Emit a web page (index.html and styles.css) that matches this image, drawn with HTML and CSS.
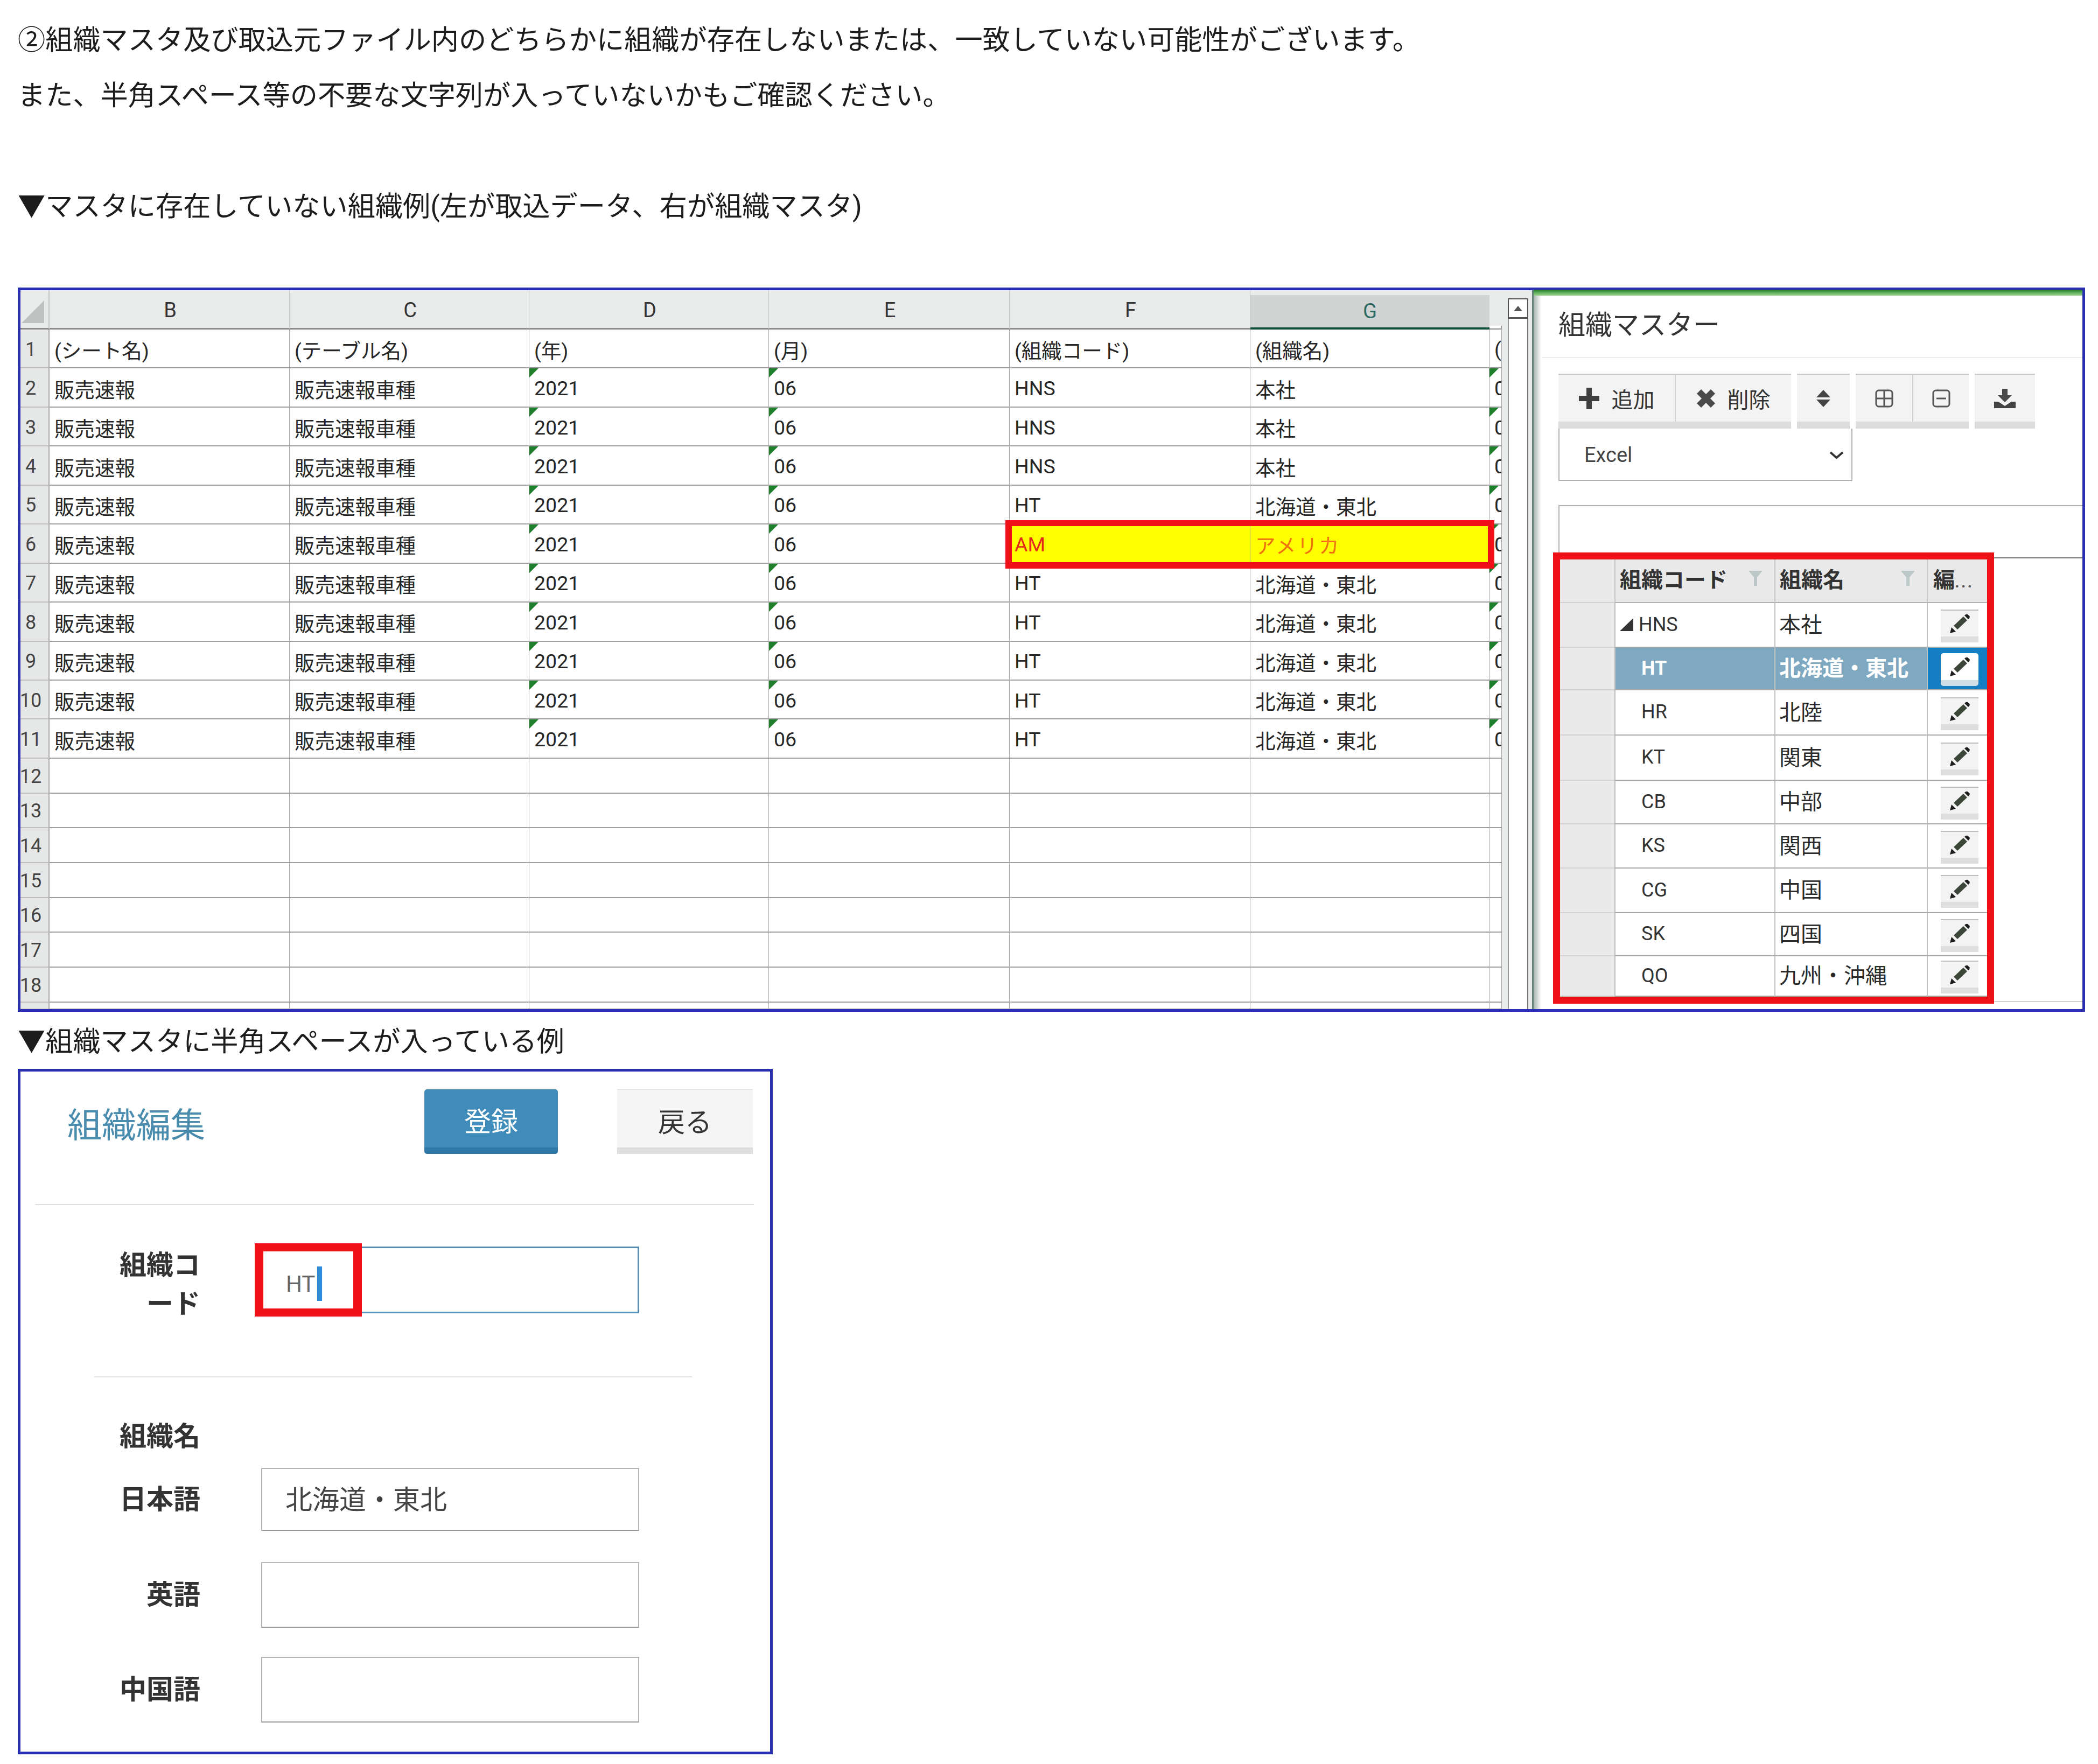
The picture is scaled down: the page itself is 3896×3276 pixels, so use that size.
FILE: index.html
```html
<!DOCTYPE html>
<html lang="ja">
<head>
    <meta charset="UTF-8">
    <title>組織マスタの確認</title>
    <link rel="stylesheet" href="styles.css">
</head>
<body>
    <svg class="icon-defs" width="0" height="0">
        <symbol id="pencil" viewBox="0 0 37 36">
            <path d="M0 36 L3 25 L11 33 Z" fill="#1d1f1d"/>
            <path d="M7 22 L25 5 L32 12 L14 29 Z" fill="#3c473a"/>
            <path d="M27 3 Q30 0 33 1 L37 5 Q37 8 34 10 Z" fill="#1d1f1d"/>
        </symbol>
        <symbol id="funnel" viewBox="0 0 26 28">
            <path d="M0 0 H26 L16 12 V28 H10 V12 Z" fill="#bcc8c8"/>
        </symbol>
    </svg>

    <p class="line">②組織マスタ及び取込元ファイル内のどちらかに組織が存在しないまたは、一致していない可能性がございます。</p>
    <p class="line">また、半角スペース等の不要な文字列が入っていないかもご確認ください。</p>
    <p class="line line-gap">▼マスタに存在していない組織例(左が取込データ、右が組織マスタ)</p>

    <div class="frame frame-wide">
        <div class="sheet">
            <div class="sheet-grid">
                <div class="sheet-row sheet-head">
                    <div class="corner"><svg width="42" height="42" viewBox="0 0 42 42"><path d="M42 0 V42 H0 Z" fill="#bfc1c1"/></svg></div>
                    <div class="col-head">B</div>
                    <div class="col-head">C</div>
                    <div class="col-head">D</div>
                    <div class="col-head">E</div>
                    <div class="col-head">F</div>
                    <div class="col-head col-active">G</div>
                    <div class="col-end"></div>
                </div>

                <div class="sheet-row">
                    <div class="row-no">1</div>
                    <div class="cell">(シート名)</div>
                    <div class="cell">(テーブル名)</div>
                    <div class="cell">(年)</div>
                    <div class="cell">(月)</div>
                    <div class="cell">(組織コード)</div>
                    <div class="cell">(組織名)</div>
                    <div class="cell">(</div>
                </div>
                <div class="sheet-row">
                    <div class="row-no">2</div>
                    <div class="cell">販売速報</div>
                    <div class="cell">販売速報車種</div>
                    <div class="cell flag">2021</div>
                    <div class="cell flag">06</div>
                    <div class="cell">HNS</div>
                    <div class="cell">本社</div>
                    <div class="cell flag">0</div>
                </div>
                <div class="sheet-row">
                    <div class="row-no">3</div>
                    <div class="cell">販売速報</div>
                    <div class="cell">販売速報車種</div>
                    <div class="cell flag">2021</div>
                    <div class="cell flag">06</div>
                    <div class="cell">HNS</div>
                    <div class="cell">本社</div>
                    <div class="cell flag">0</div>
                </div>
                <div class="sheet-row">
                    <div class="row-no">4</div>
                    <div class="cell">販売速報</div>
                    <div class="cell">販売速報車種</div>
                    <div class="cell flag">2021</div>
                    <div class="cell flag">06</div>
                    <div class="cell">HNS</div>
                    <div class="cell">本社</div>
                    <div class="cell flag">0</div>
                </div>
                <div class="sheet-row">
                    <div class="row-no">5</div>
                    <div class="cell">販売速報</div>
                    <div class="cell">販売速報車種</div>
                    <div class="cell flag">2021</div>
                    <div class="cell flag">06</div>
                    <div class="cell">HT</div>
                    <div class="cell">北海道・東北</div>
                    <div class="cell flag">0</div>
                </div>
                <div class="sheet-row">
                    <div class="row-no">6</div>
                    <div class="cell">販売速報</div>
                    <div class="cell">販売速報車種</div>
                    <div class="cell flag">2021</div>
                    <div class="cell flag">06</div>
                    <div class="cell cell-alert">AM</div>
                    <div class="cell cell-alert cell-alert-name">アメリカ</div>
                    <div class="cell flag">0</div>
                </div>
                <div class="sheet-row">
                    <div class="row-no">7</div>
                    <div class="cell">販売速報</div>
                    <div class="cell">販売速報車種</div>
                    <div class="cell flag">2021</div>
                    <div class="cell flag">06</div>
                    <div class="cell">HT</div>
                    <div class="cell">北海道・東北</div>
                    <div class="cell flag">0</div>
                </div>
                <div class="sheet-row">
                    <div class="row-no">8</div>
                    <div class="cell">販売速報</div>
                    <div class="cell">販売速報車種</div>
                    <div class="cell flag">2021</div>
                    <div class="cell flag">06</div>
                    <div class="cell">HT</div>
                    <div class="cell">北海道・東北</div>
                    <div class="cell flag">0</div>
                </div>
                <div class="sheet-row">
                    <div class="row-no">9</div>
                    <div class="cell">販売速報</div>
                    <div class="cell">販売速報車種</div>
                    <div class="cell flag">2021</div>
                    <div class="cell flag">06</div>
                    <div class="cell">HT</div>
                    <div class="cell">北海道・東北</div>
                    <div class="cell flag">0</div>
                </div>
                <div class="sheet-row">
                    <div class="row-no">10</div>
                    <div class="cell">販売速報</div>
                    <div class="cell">販売速報車種</div>
                    <div class="cell flag">2021</div>
                    <div class="cell flag">06</div>
                    <div class="cell">HT</div>
                    <div class="cell">北海道・東北</div>
                    <div class="cell flag">0</div>
                </div>
                <div class="sheet-row">
                    <div class="row-no">11</div>
                    <div class="cell">販売速報</div>
                    <div class="cell">販売速報車種</div>
                    <div class="cell flag">2021</div>
                    <div class="cell flag">06</div>
                    <div class="cell">HT</div>
                    <div class="cell">北海道・東北</div>
                    <div class="cell flag">0</div>
                </div>

                <div class="sheet-row row-empty"><div class="row-no">12</div><div class="cell"></div><div class="cell"></div><div class="cell"></div><div class="cell"></div><div class="cell"></div><div class="cell"></div><div class="cell"></div></div>
                <div class="sheet-row row-empty"><div class="row-no">13</div><div class="cell"></div><div class="cell"></div><div class="cell"></div><div class="cell"></div><div class="cell"></div><div class="cell"></div><div class="cell"></div></div>
                <div class="sheet-row row-empty"><div class="row-no">14</div><div class="cell"></div><div class="cell"></div><div class="cell"></div><div class="cell"></div><div class="cell"></div><div class="cell"></div><div class="cell"></div></div>
                <div class="sheet-row row-empty"><div class="row-no">15</div><div class="cell"></div><div class="cell"></div><div class="cell"></div><div class="cell"></div><div class="cell"></div><div class="cell"></div><div class="cell"></div></div>
                <div class="sheet-row row-empty"><div class="row-no">16</div><div class="cell"></div><div class="cell"></div><div class="cell"></div><div class="cell"></div><div class="cell"></div><div class="cell"></div><div class="cell"></div></div>
                <div class="sheet-row row-empty"><div class="row-no">17</div><div class="cell"></div><div class="cell"></div><div class="cell"></div><div class="cell"></div><div class="cell"></div><div class="cell"></div><div class="cell"></div></div>
                <div class="sheet-row row-empty"><div class="row-no">18</div><div class="cell"></div><div class="cell"></div><div class="cell"></div><div class="cell"></div><div class="cell"></div><div class="cell"></div><div class="cell"></div></div>
                <div class="sheet-row row-cut"><div class="row-no"></div><div class="cell"></div><div class="cell"></div><div class="cell"></div><div class="cell"></div><div class="cell"></div><div class="cell"></div><div class="cell"></div></div>
            </div>

            <div class="scrollbar">
                <div class="scroll-up"><svg width="16" height="10" viewBox="0 0 16 10"><path d="M8 0 L16 10 H0 Z" fill="#555"/></svg></div>
            </div>

            <div class="alert-box"></div>
        </div>

        <div class="panel">
            <div class="panel-bar"></div>
            <div class="panel-title">組織マスター</div>

            <div class="panel-body">
                <div class="toolbar">
                    <div class="tool-group">
                        <div class="tool-btn tool-text">
                            <svg width="38" height="40" viewBox="0 0 38 40"><path d="M14 0 H24 V15 H38 V25 H24 V40 H14 V25 H0 V15 H14 Z" fill="#3f3f3f"/></svg>
                            追加
                        </div>
                        <div class="tool-btn tool-text">
                            <svg width="34" height="34" viewBox="0 0 34 34"><path d="M8 0 L17 9 L26 0 L34 8 L25 17 L34 26 L26 34 L17 25 L8 34 L0 26 L9 17 L0 8 Z" fill="#4a4a4a"/></svg>
                            削除
                        </div>
                    </div>
                    <div class="tool-group">
                        <div class="tool-btn tool-sort">
                            <svg width="26" height="32" viewBox="0 0 26 32"><path d="M13 0 L26 14 H0 Z M0 18 H26 L13 32 Z" fill="#444"/></svg>
                        </div>
                    </div>
                    <div class="tool-group">
                        <div class="tool-btn tool-expand">
                            <svg width="34" height="34" viewBox="0 0 34 34"><rect x="2" y="2" width="30" height="30" rx="5" fill="none" stroke="#555" stroke-width="3"/><path d="M17 3 V31 M3 17 H31" stroke="#555" stroke-width="3"/></svg>
                        </div>
                        <div class="tool-btn tool-expand">
                            <svg width="34" height="34" viewBox="0 0 34 34"><rect x="2" y="2" width="30" height="30" rx="5" fill="none" stroke="#555" stroke-width="3"/><path d="M8 17 H26" stroke="#555" stroke-width="3"/></svg>
                        </div>
                    </div>
                    <div class="tool-group">
                        <div class="tool-btn tool-save">
                            <svg width="40" height="36" viewBox="0 0 40 36"><path d="M15 0 H25 V12 H33 L20 25 L7 12 H15 Z" fill="#4a4a4a"/><path d="M0 24 H8 L20 32 L32 24 H40 V36 H0 Z" fill="#444"/></svg>
                        </div>
                    </div>
                </div>

                <div class="format-select">
                    Excel
                    <svg width="27" height="15" viewBox="0 0 27 15"><path d="M2 2 L13.5 12 L25 2" fill="none" stroke="#333" stroke-width="4"/></svg>
                </div>

                <div class="group-bar"></div>

                <div class="tree-wrap">
                    <div class="tree">
                        <div class="tree-corner"></div>
                        <div class="tree-head">組織コード<svg width="26" height="28"><use href="#funnel"/></svg></div>
                        <div class="tree-head">組織名<svg width="26" height="28"><use href="#funnel"/></svg></div>
                        <div class="tree-head tree-head-edit">編<span class="tree-more">...</span></div>

                        <div class="tree-side"></div>
                        <div class="tree-code tree-root"><svg width="25" height="24" viewBox="0 0 25 24"><path d="M25 0 V24 H0 Z" fill="#333"/></svg>HNS</div>
                        <div class="tree-name">本社</div>
                        <div class="tree-edit"><div class="edit-btn"><svg width="37" height="36"><use href="#pencil"/></svg></div></div>

                        <div class="tree-side"></div>
                        <div class="tree-code is-picked">HT</div>
                        <div class="tree-name is-picked">北海道・東北</div>
                        <div class="tree-edit is-picked-edit"><div class="edit-btn"><svg width="37" height="36"><use href="#pencil"/></svg></div></div>

                        <div class="tree-side"></div>
                        <div class="tree-code">HR</div>
                        <div class="tree-name">北陸</div>
                        <div class="tree-edit"><div class="edit-btn"><svg width="37" height="36"><use href="#pencil"/></svg></div></div>

                        <div class="tree-side"></div>
                        <div class="tree-code">KT</div>
                        <div class="tree-name">関東</div>
                        <div class="tree-edit"><div class="edit-btn"><svg width="37" height="36"><use href="#pencil"/></svg></div></div>

                        <div class="tree-side"></div>
                        <div class="tree-code">CB</div>
                        <div class="tree-name">中部</div>
                        <div class="tree-edit"><div class="edit-btn"><svg width="37" height="36"><use href="#pencil"/></svg></div></div>

                        <div class="tree-side"></div>
                        <div class="tree-code">KS</div>
                        <div class="tree-name">関西</div>
                        <div class="tree-edit"><div class="edit-btn"><svg width="37" height="36"><use href="#pencil"/></svg></div></div>

                        <div class="tree-side"></div>
                        <div class="tree-code">CG</div>
                        <div class="tree-name">中国</div>
                        <div class="tree-edit"><div class="edit-btn"><svg width="37" height="36"><use href="#pencil"/></svg></div></div>

                        <div class="tree-side"></div>
                        <div class="tree-code">SK</div>
                        <div class="tree-name">四国</div>
                        <div class="tree-edit"><div class="edit-btn"><svg width="37" height="36"><use href="#pencil"/></svg></div></div>

                        <div class="tree-side"></div>
                        <div class="tree-code">QO</div>
                        <div class="tree-name">九州・沖縄</div>
                        <div class="tree-edit"><div class="edit-btn"><svg width="37" height="36"><use href="#pencil"/></svg></div></div>
                    </div>
                    <div class="tree-rest"></div>
                </div>
            </div>
        </div>
    </div>

    <p class="line line-under">▼組織マスタに半角スペースが入っている例</p>

    <div class="frame frame-form">
        <div class="form-head">
            <div class="form-title">組織編集</div>
            <div class="btn btn-save">登録</div>
            <div class="btn btn-back">戻る</div>
        </div>

        <div class="form-row form-row-code">
            <div class="label">組織コ<br>ード</div>
            <div class="field field-focus">
                <span class="field-code">HT</span><span class="caret"></span>
                <div class="code-mark"></div>
            </div>
        </div>

        <div class="form-line"></div>

        <div class="form-row form-row-title">
            <div class="label">組織名</div>
        </div>
        <div class="form-row form-row-first">
            <div class="label">日本語</div>
            <div class="field field-short">北海道・東北</div>
        </div>
        <div class="form-row form-row-next">
            <div class="label">英語</div>
            <div class="field"></div>
        </div>
        <div class="form-row form-row-last">
            <div class="label">中国語</div>
            <div class="field"></div>
        </div>
    </div>
</body>
</html>
```

FILE: styles.css
```css
* {
    margin: 0;
    padding: 0;
    box-sizing: border-box;
}

body {
    font-family: Roboto, "Noto Sans CJK JP", sans-serif;
    background: white;
    color: #222;
    padding: 22px 0 0 33px;
}

.icon-defs {
    position: absolute;
}

.line {
    font-size: 51.2px;
    line-height: 105px;
    height: 103px;
    color: #1c1c1c;
    white-space: nowrap;
}

.line-gap {
    margin-top: 103px;
    margin-bottom: 100px;
}

.line-under {
    margin-top: 3px;
}

.frame {
    border: 5px solid #2a2fb0;
    background: white;
}

.frame-wide {
    width: 3839px;
    height: 1345px;
    display: flex;
}

.frame-form {
    width: 1402px;
    height: 1273px;
}

/* spreadsheet */

.sheet {
    position: relative;
    width: 2807px;
    height: 1335px;
    display: flex;
    background: #e9ebeb;
    overflow: hidden;
}

.sheet-grid {
    width: 2751px;
    flex-shrink: 0;
    background: white;
}

.sheet-row {
    display: grid;
    grid-template-columns: 54px 446px 445px 445px 447px 447px 444px 23px;
    height: 72.45px;
}

.sheet-head {
    height: 73px;
    background: #e9ebeb;
}

.row-empty {
    height: 64.7px;
}

.row-cut {
    height: 13px;
}

.corner {
    display: flex;
    align-items: flex-end;
    justify-content: flex-end;
    padding: 0 8px 9px 0;
    border-right: 2px solid #c4c6c6;
    border-bottom: 3px solid #8c8c8c;
}

.col-head {
    display: flex;
    align-items: center;
    justify-content: center;
    padding: 4px 0 0 3px;
    font-size: 38px;
    color: #333;
    border-right: 1px solid #c4c6c6;
    border-bottom: 3px solid #8c8c8c;
}

.col-active {
    margin-top: 9px;
    padding: 0;
    background: #d2d3d3;
    color: #2f6a62;
    border-right: none;
    border-bottom: 4px solid #0f4f3c;
}

.col-end {
    border-bottom: 2px solid #8c8c8c;
    border-right: 2px solid #a0a0a0;
    margin-top: 66px;
    background: white;
}

.row-no {
    display: flex;
    align-items: center;
    justify-content: center;
    padding: 3px 14px 0 0;
    font-size: 36px;
    color: #444;
    background: #e6e7e7;
    border-right: 2px solid #a8a8a8;
    border-bottom: 2px solid #c0c0c0;
}

.cell {
    position: relative;
    display: flex;
    align-items: center;
    padding: 3px 0 0 9px;
    font-size: 37.5px;
    color: #262626;
    white-space: nowrap;
    overflow: hidden;
    border-right: 1px solid #a8a8a8;
    border-bottom: 2px solid #a0a0a0;
}

.flag::before {
    content: "";
    position: absolute;
    left: 0;
    top: 0;
    border-top: 17px solid #1f7f2c;
    border-right: 17px solid transparent;
}

.cell-alert {
    background: #ffff00;
    color: #e62a1a;
}

.cell-alert-name {
    color: #f0700f;
    letter-spacing: 2.5px;
}

.alert-box {
    position: absolute;
    left: 1829px;
    top: 427px;
    width: 908px;
    height: 90px;
    border: 12px solid #ee1118;
    border-top-width: 11px;
}

.scrollbar {
    width: 38px;
    margin: 15px 0 0 11px;
    background: white;
    border-left: 2px solid #9a9a9a;
    border-right: 2px solid #777;
}

.scroll-up {
    height: 38px;
    display: flex;
    align-items: center;
    justify-content: center;
    border: 2px solid #555;
    border-bottom-width: 3px;
    margin: 0 -2px;
}

/* organisation master panel */

.panel {
    flex: 1;
    height: 1335px;
    border-left: 3px solid #5f7f78;
    background: linear-gradient(to right, #a8b4b0, #ffffff 14px);
}

.panel-bar {
    height: 10px;
    background: linear-gradient(to bottom, #2f8f35, #9ad28c);
}

.panel-title {
    height: 116px;
    margin-left: 16px;
    padding-left: 30px;
    font-size: 50px;
    line-height: 110px;
    color: #333;
    border-bottom: 2px solid #eeeeee;
}

.panel-body {
    padding-left: 46px;
}

.toolbar {
    display: flex;
    gap: 11px;
    margin-top: 29px;
    height: 102px;
}

.tool-group {
    display: flex;
    height: 102px;
    background: #f3f3f3;
    border-top: 2px solid #cccccc;
    border-bottom: 13px solid #dcdcdc;
}

.tool-btn {
    display: flex;
    align-items: center;
    justify-content: center;
    font-size: 40px;
    color: #333;
}

.tool-text {
    width: 216px;
    gap: 23px;
}

.tool-text + .tool-text {
    border-left: 2px solid #cfcfcf;
}

.tool-sort {
    width: 98px;
}

.tool-expand {
    width: 105px;
}

.tool-expand + .tool-expand {
    border-left: 2px solid #cfcfcf;
}

.tool-save {
    width: 112px;
}

.format-select {
    display: flex;
    align-items: center;
    justify-content: space-between;
    width: 546px;
    height: 97px;
    padding: 3px 14px 0 46px;
    font-size: 38px;
    color: #444;
    background: white;
    border: 2px solid #b0b0b0;
    border-top: none;
}

.group-bar {
    height: 99px;
    margin-top: 45px;
    border-top: 2px solid #b0b0b0;
    border-left: 2px solid #b0b0b0;
    border-bottom: 2px solid #777;
}

.tree-wrap {
    display: flex;
    margin: -11px 0 0 -10px;
}

.tree {
    display: grid;
    grid-template-columns: 101px 297px 283px 112px;
    grid-template-rows: 81px 83px 79px 84px 84px 81px 82px 83px 80px 75px;
    width: 819px;
    height: 838px;
    border: 13px solid #ee1118;
    background: white;
    font-size: 40px;
}

.tree-rest {
    flex: 1;
    height: 835px;
    border-bottom: 2px solid #cfcfcf;
}

.tree-corner,
.tree-side {
    background: #e9e9e9;
    border-bottom: 2px solid #d0d0d0;
}

.tree-head {
    display: flex;
    align-items: center;
    justify-content: space-between;
    padding: 0 22px 10px 8px;
    font-weight: bold;
    color: #333;
    background: #e9e9e9;
    border-left: 2px solid #c6c6c6;
    border-bottom: 2px solid #b0b0b0;
}

.tree-head-edit {
    justify-content: flex-start;
    padding: 0 0 10px 10px;
}

.tree-more {
    font-size: 30px;
    color: #555;
    padding-top: 14px;
    letter-spacing: 3px;
}

.tree-code,
.tree-name,
.tree-edit {
    display: flex;
    align-items: center;
    border-left: 2px solid #c0c0c0;
    border-bottom: 2px solid #a8a8a8;
}

.tree-code {
    padding: 0 0 2px 48px;
    font-size: 36px;
    color: #333;
}

.tree-root {
    padding-left: 8px;
    gap: 10px;
}

.tree-name {
    padding: 0 0 7px 7px;
    color: #2b2b2b;
    white-space: nowrap;
}

.tree-edit {
    padding: 4px 0 0 24px;
}

.is-picked {
    background: #7fa9c1;
    color: white;
    font-weight: bold;
}

.is-picked-edit {
    background: #137fc2;
}

.is-picked-edit .edit-btn {
    background: white;
    border-top: none;
    border-radius: 5px;
    border-bottom-color: #cfdde4;
}

.edit-btn {
    display: flex;
    align-items: center;
    justify-content: center;
    width: 70px;
    height: 61px;
    background: #f3f3f3;
    border-top: 2px solid #bfbfbf;
    border-bottom: 11px solid #dedede;
}

/* edit form */

.form-head {
    display: flex;
    align-items: flex-start;
    height: 248px;
    margin: 0 30px 0 27px;
    padding: 33px 0 0 60px;
    border-bottom: 2px solid #e0e0e0;
}

.form-title {
    width: 663px;
    padding-top: 20px;
    font-size: 64px;
    line-height: 96px;
    color: #4a8cae;
}

.btn {
    display: flex;
    align-items: center;
    justify-content: center;
    height: 120px;
    padding-top: 4px;
    font-size: 50px;
}

.btn-save {
    width: 248px;
    margin-right: 110px;
    color: white;
    background: #3f8bb9;
    border-bottom: 12px solid #2f78a7;
    border-radius: 5px;
}

.btn-back {
    width: 252px;
    color: #333;
    background: #f5f5f5;
    border-top: 1px solid #e0e0e0;
    border-bottom: 12px solid #dcdddd;
}

.form-row {
    display: flex;
    align-items: center;
    padding-left: 177px;
}

.form-row-code {
    align-items: flex-start;
    margin-top: 76px;
}

.form-row-title {
    margin-top: 74px;
}

.form-row-first {
    margin-top: 22px;
}

.form-row-next {
    margin-top: 58px;
}

.form-row-last {
    margin-top: 54px;
}

.label {
    width: 157px;
    text-align: right;
    font-size: 50px;
    font-weight: bold;
    line-height: 72px;
    color: #333;
    flex-shrink: 0;
}

.field {
    position: relative;
    display: flex;
    align-items: center;
    width: 702px;
    height: 122px;
    margin-left: 113px;
    padding-left: 43px;
    font-size: 50px;
    color: #444;
    border: 2px solid #b4b4b4;
    border-bottom-color: #999;
}

.field-short {
    height: 117px;
    padding-bottom: 8px;
}

.field-focus {
    height: 124px;
    margin-top: 1px;
    border: 3px solid #5b8db2;
    padding: 14px 0 0 43px;
}

.field-code {
    font-size: 42px;
    color: #666;
}

.caret {
    width: 9px;
    height: 64px;
    margin-left: 4px;
    background: #2d8ce0;
}

.code-mark {
    position: absolute;
    left: -15px;
    top: -9px;
    width: 199px;
    height: 136px;
    border: 16px solid #ee1118;
    border-top-width: 15px;
    border-bottom-width: 15px;
}

.form-line {
    height: 2px;
    margin: 98px 145px 0 137px;
    background: #e4e4e4;
}
```
